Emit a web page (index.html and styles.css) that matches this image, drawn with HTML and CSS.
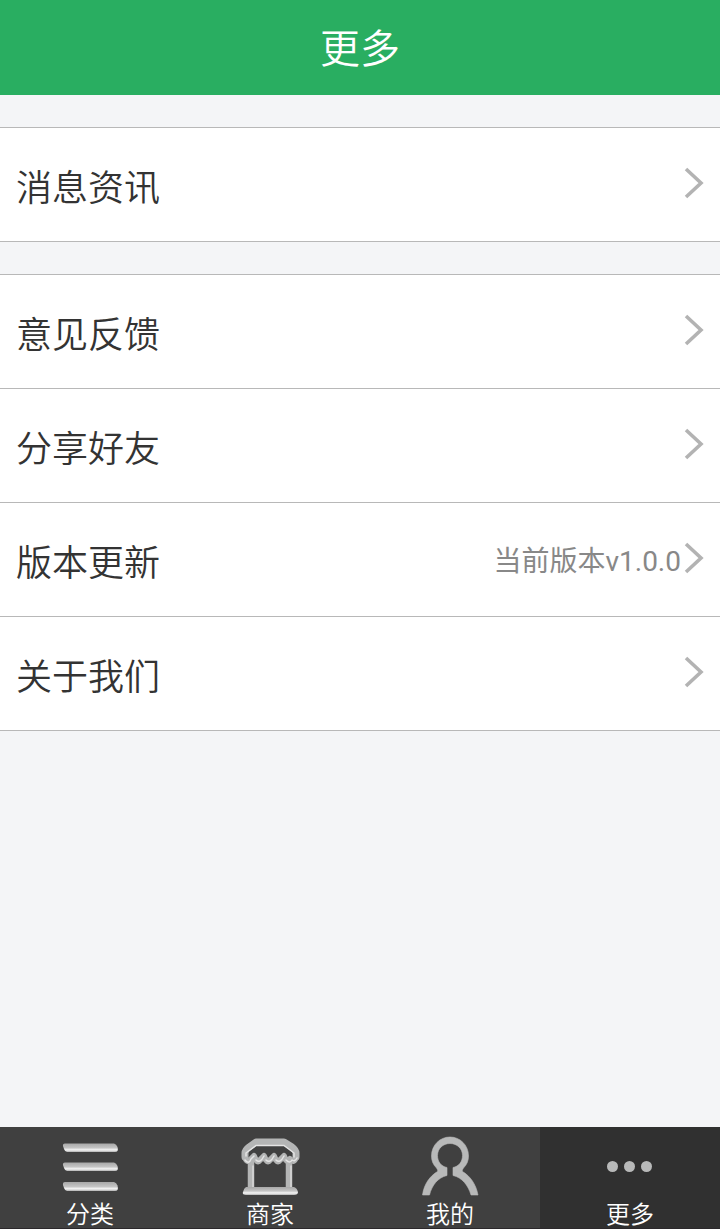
FILE: index.html
```html
<!DOCTYPE html>
<html lang="zh-CN">
<head>
<meta charset="utf-8">
<meta name="viewport" content="width=device-width, initial-scale=1">
<title>更多</title>
<link rel="stylesheet" href="styles.css">
</head>
<body>
<svg class="defs" aria-hidden="true">
  <defs>
    <linearGradient id="metal" x1="0" y1="0" x2="0" y2="1">
      <stop offset="0" stop-color="#a8a8a8"/>
      <stop offset="0.5" stop-color="#c4c4c4"/>
      <stop offset="0.75" stop-color="#f6f6f6"/>
      <stop offset="1" stop-color="#b0b0b0"/>
    </linearGradient>
    <symbol id="chevron" viewBox="0 0 20 32">
      <path d="M2 2 L17 16 L2 30" fill="none" stroke="#b3b3b3" stroke-width="3.6"/>
    </symbol>
  </defs>
</svg>
<header class="header"><h1 class="title">更多</h1></header>
<main class="content">
  <ul class="list">
    <li class="item"><a class="row" href="#news"><span class="label">消息资讯</span><svg class="chevron" aria-hidden="true"><use href="#chevron"/></svg></a></li>
  </ul>
  <ul class="list">
    <li class="item"><a class="row" href="#feedback"><span class="label">意见反馈</span><svg class="chevron" aria-hidden="true"><use href="#chevron"/></svg></a></li>
    <li class="item"><a class="row" href="#share"><span class="label">分享好友</span><svg class="chevron" aria-hidden="true"><use href="#chevron"/></svg></a></li>
    <li class="item"><a class="row" href="#update"><span class="label">版本更新</span><span class="note">当前版本v1.0.0</span><svg class="chevron" aria-hidden="true"><use href="#chevron"/></svg></a></li>
    <li class="item"><a class="row" href="#about"><span class="label">关于我们</span><svg class="chevron" aria-hidden="true"><use href="#chevron"/></svg></a></li>
  </ul>
</main>
<nav class="tabs">
  <a class="tab" href="#category">
    <svg class="icon" viewBox="0 0 60 64" aria-hidden="true">
      <g fill="url(#metal)">
        <path d="M5 8.500H54Q56.500 9 57.500 12Q59 17 55 17H7Q5 17 4 14L3 11Q2.500 8.500 5 8.500Z"/>
        <path d="M5 27.500H54Q56.500 28 57.500 31Q59 36 55 36H7Q5 36 4 33L3 30Q2.500 27.500 5 27.500Z"/>
        <path d="M5 47H54Q56.500 47.500 57.500 50.500Q59 56 55 56H7Q5 56 4 53L3 50Q2.500 47 5 47Z"/>
      </g>
    </svg>
    <span class="tab-label">分类</span>
  </a>
  <a class="tab" href="#shops">
    <svg class="icon" viewBox="0 0 60 64" aria-hidden="true">
      <g fill="none" stroke-linejoin="round" stroke-linecap="round">
        <path d="M11 26V54M49 26V54" stroke="#b4b5b5" stroke-width="6.500" stroke-linecap="butt"/>
        <path d="M13 31V52M51 31V52" stroke="#d8d8d8" stroke-width="1.500"/>
        <path d="M5 22V18Q5 15 9 12L16 7H44L52 12Q56 15 56 18V22" stroke="#b4b5b5" stroke-width="7"/>
        <path d="M5 22Q7 29 11 24L14 21Q17 29 20 25L24 21Q27 29 30 25L34 21Q37 29 40 25L44 21Q47 29 50 24Q54 29 56 22" stroke="#b4b5b5" stroke-width="6"/>
        <path d="M6 21V18L16 10.500H44L54 18V22M5 25Q9 30 11 24L14 21M16 25Q20 29 24 21M26 25Q30 29 34 21M36 25Q40 29 44 21M46 25Q50 29 52 25Q55 27 57 23" stroke="#e4e4e4" stroke-width="1.500"/>
      </g>
      <path d="M6 52H54Q57 53 58 57Q58 60 54 60H6Q2 60 3 57Q4 53 6 52Z" fill="url(#metal)"/>
    </svg>
    <span class="tab-label">商家</span>
  </a>
  <a class="tab" href="#mine">
    <svg class="icon" viewBox="0 0 60 64" aria-hidden="true">
      <path fill="#b8b9b9" stroke="#b8b9b9" stroke-width="0.600" d="M2.500 60C4 49 10 41 17.500 36.500C18 35.500 17.500 34.500 16.500 33C13 29.500 11.500 25.500 11.500 21C11.500 10 20 2 30 2S48.500 10 48.500 21C48.500 25.500 47 29.500 43.500 33C42.500 34.500 42 35.500 42.500 36.500C50 41 56 49 58 60H51C48 50 42 42.500 33 40.500V32.500C38.500 31.500 42.500 27 42.500 20.500C42.500 13.500 37 8.500 30 8.500S17.500 13.500 17.500 20.500C17.500 27 21.500 31.500 27 32.500V40.500C18 42.500 12 50 9.500 60Z"/>
    </svg>
    <span class="tab-label">我的</span>
  </a>
  <a class="tab active" href="#more" aria-current="page">
    <svg class="icon" viewBox="0 0 60 64" aria-hidden="true">
      <g fill="#b8b9b9"><circle cx="12.500" cy="31.500" r="5.500"/><circle cx="29.500" cy="31.500" r="5.500"/><circle cx="46.500" cy="31.500" r="5.500"/></g>
    </svg>
    <span class="tab-label">更多</span>
  </a>
</nav>
</body>
</html>
```

FILE: styles.css
```css
* {
  box-sizing: border-box;
}

body {
  margin: 0;
  min-height: 100vh;
  display: flex;
  flex-direction: column;
  background: #f4f5f7;
  color: #333;
  font-family: Roboto, "Noto Sans CJK SC", sans-serif;
  font-weight: 350;
}

a {
  color: inherit;
  text-decoration: none;
}

.defs {
  position: absolute;
  width: 0;
  height: 0;
}

.header {
  padding: 20px 16px 15px;
  background: #29ae61;
  color: #fff;
  text-align: center;
}

.title {
  margin: 0;
  font-size: 40px;
  line-height: 60px;
  font-weight: 350;
}

.content {
  flex: 1;
  display: flex;
  flex-direction: column;
  gap: 32px;
  padding: 32px 0;
}

.list {
  margin: 0;
  padding: 0;
  list-style: none;
  background: #fff;
  border-top: 1px solid #b8b8b8;
}

.item {
  border-bottom: 1px solid #b8b8b8;
}

.row {
  display: flex;
  align-items: center;
  padding: 27px 16px 30px;
}

.label {
  flex: 1;
  padding-top: 12px;
  font-size: 36px;
  line-height: 44px;
}

.note {
  padding-top: 8px;
  font-size: 28px;
  font-weight: 400;
  line-height: 40px;
  color: #888;
}

.chevron {
  width: 20px;
  height: 32px;
  margin-left: 3px;
}

.tabs {
  display: flex;
  background: #404040;
  border-bottom: 1px solid #2b282b;
  color: #fff;
}

.tab {
  flex: 1;
  display: flex;
  flex-direction: column;
  align-items: center;
  padding-top: 8px;
}

.active {
  background: #303030;
}

.icon {
  width: 60px;
  height: 64px;
}

.tab-label {
  padding-top: 4px;
  font-size: 24px;
  line-height: 25px;
}
```
